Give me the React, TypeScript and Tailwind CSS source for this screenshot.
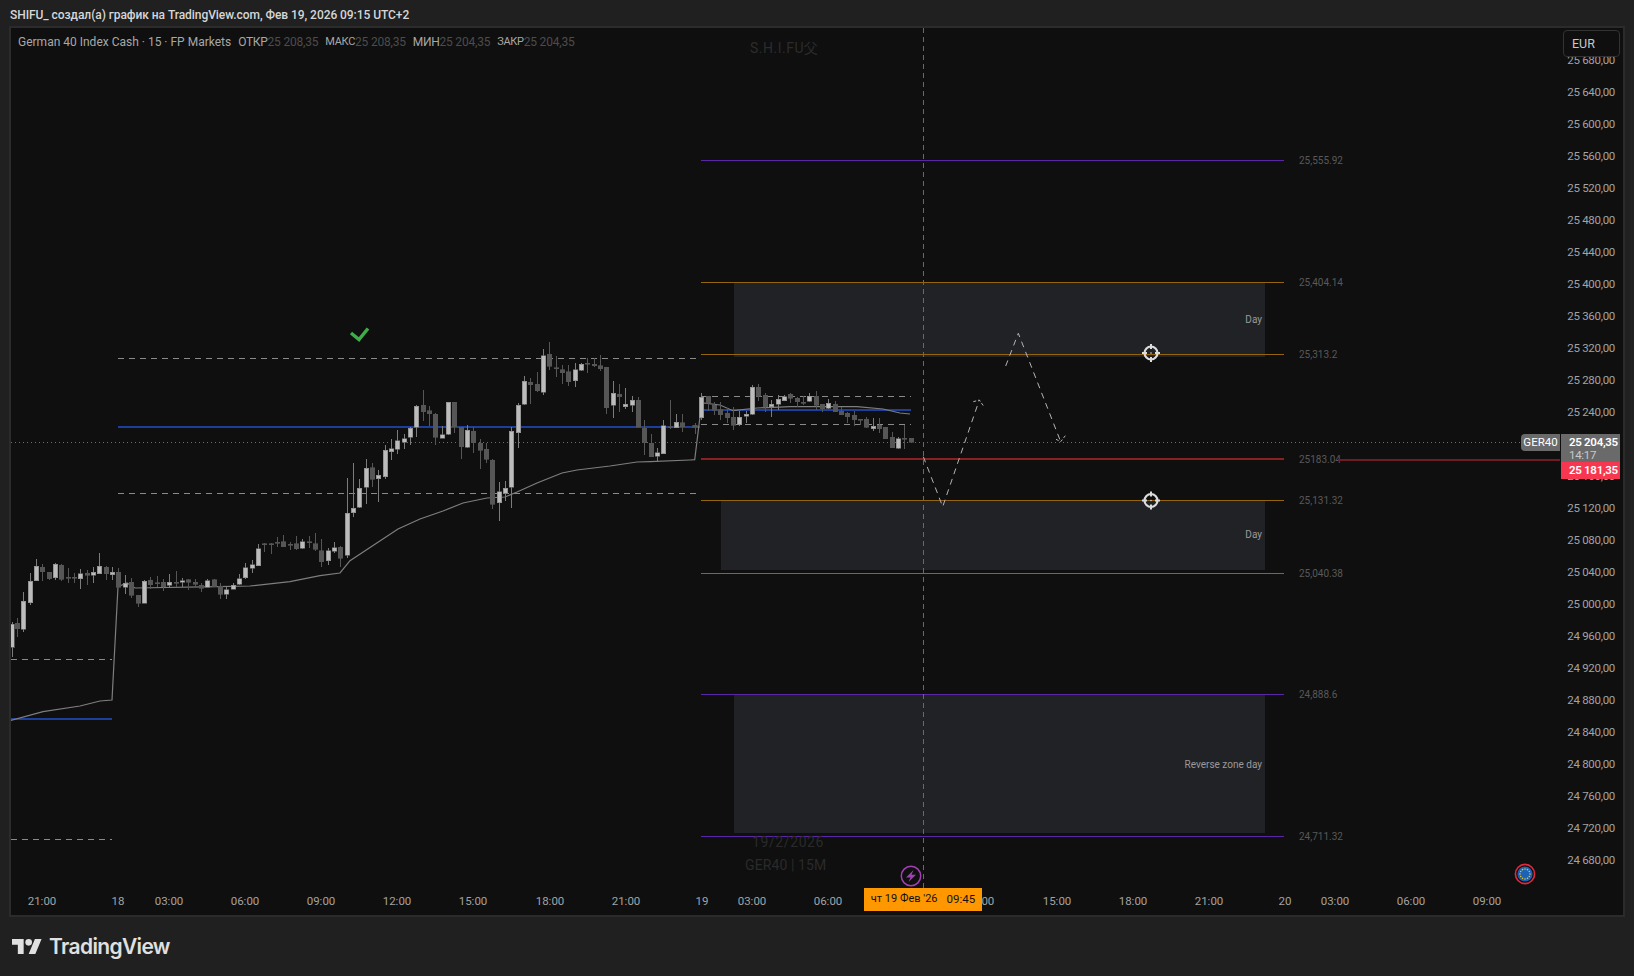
import React from "react";

// [x, bodyTop, bodyBottom, wickTop, wickBottom, bright] in crop coordinates
type Bar = [number, number, number, number, number, number];

const session1a: Bar[] = [
  [36, 283, 352, 277, 382, 1], [53, 280, 296, 265, 320, 0], [71, 214, 298, 186, 305, 1], [91, 154, 218, 128, 224, 1],
  [109, 109, 152, 87, 152, 1], [127, 112, 125, 102, 152, 0], [148, 127, 146, 127, 150, 0], [166, 103, 143, 100, 150, 1],
  [184, 105, 147, 103, 152, 0], [205, 141, 143, 114, 160, 0], [223, 142, 144, 128, 158, 0], [241, 131, 146, 118, 176, 1],
  [262, 130, 136, 120, 164, 0], [280, 127, 136, 112, 160, 1], [298, 109, 131, 70, 131, 1], [319, 112, 131, 108, 150, 0],
  [337, 127, 134, 112, 150, 1], [355, 127, 172, 115, 172, 0], [376, 160, 172, 135, 192, 1], [394, 157, 196, 145, 205, 0],
  [415, 196, 220, 196, 230, 0], [433, 154, 220, 150, 220, 1], [451, 151, 164, 142, 178, 0], [472, 158, 161, 138, 172, 0],
  [490, 157, 170, 148, 182, 0], [508, 157, 166, 132, 172, 1], [529, 157, 160, 123, 172, 0], [547, 152, 157, 143, 170, 1],
  [565, 149, 157, 148, 180, 0], [586, 157, 163, 148, 170, 0], [604, 165, 175, 160, 186, 0], [622, 152, 172, 148, 172, 1],
  [643, 149, 170, 148, 172, 0], [661, 168, 193, 160, 207, 0], [679, 179, 193, 172, 207, 1], [700, 165, 178, 160, 178, 1],
  [718, 146, 163, 132, 165, 1], [736, 113, 143, 100, 146, 1], [757, 104, 115, 90, 128, 1], [775, 56, 107, 43, 107, 1],
  [793, 41, 44, 40, 66, 0], [814, 41, 42, 40, 72, 0], [832, 36, 38, 22, 52, 0], [850, 35, 50, 15, 50, 0],
  [871, 42, 44, 36, 60, 0], [889, 41, 56, 18, 60, 0], [907, 35, 55, 28, 58, 1], [928, 35, 37, 18, 54, 0],
  [946, 41, 58, 10, 64, 0], [964, 62, 95, 28, 112, 0], [985, 62, 92, 55, 105, 1], [1003, 53, 64, 37, 70, 1],
  [1021, 52, 85, 48, 112, 0],
];

const session1b: Bar[] = [
  [52, 580, 705, 475, 715, 1], [70, 565, 578, 430, 590, 1], [88, 505, 562, 478, 565, 1], [109, 445, 502, 418, 552, 1],
  [127, 443, 478, 430, 500, 0], [146, 466, 476, 450, 545, 1], [166, 391, 470, 375, 476, 1], [184, 386, 395, 357, 420, 1],
  [203, 362, 388, 330, 402, 1], [223, 356, 366, 342, 387, 1], [241, 325, 352, 322, 375, 1], [260, 259, 322, 255, 352, 1],
  [280, 256, 275, 210, 302, 0], [298, 272, 281, 258, 318, 0], [316, 283, 352, 279, 374, 0], [337, 344, 355, 318, 355, 1],
  [355, 247, 343, 247, 345, 1], [373, 247, 320, 247, 340, 0], [394, 322, 380, 322, 417, 0], [412, 331, 382, 315, 383, 1],
  [430, 334, 368, 322, 398, 0], [451, 369, 391, 357, 447, 0], [469, 388, 418, 370, 428, 0], [487, 421, 553, 418, 567, 0],
  [508, 515, 548, 487, 602, 1], [526, 505, 519, 482, 543, 1], [544, 334, 502, 322, 563, 1], [565, 256, 338, 250, 383, 1],
  [583, 184, 253, 168, 255, 1], [601, 187, 194, 174, 252, 0], [622, 193, 212, 156, 215, 0], [640, 107, 217, 87, 224, 1],
  [658, 103, 139, 67, 150, 0], [679, 143, 145, 108, 170, 0], [697, 149, 158, 135, 192, 0], [715, 155, 185, 135, 197, 0],
  [736, 149, 182, 128, 200, 1], [754, 133, 151, 128, 153, 1], [772, 129, 131, 114, 158, 0], [793, 133, 137, 115, 140, 0],
  [811, 137, 146, 105, 152, 0], [829, 142, 263, 140, 282, 0], [850, 220, 256, 183, 293, 1], [868, 223, 230, 192, 275, 0],
  [886, 253, 260, 205, 267, 1], [907, 241, 256, 228, 276, 1], [925, 241, 322, 232, 322, 0], [943, 325, 368, 300, 405, 0],
  [964, 369, 410, 342, 410, 0], [982, 398, 409, 385, 425, 1], [1000, 317, 401, 300, 401, 1], [1021, 320, 322, 240, 328, 0],
  [1039, 307, 323, 282, 323, 1], [1057, 308, 320, 283, 335, 0],
];

const session2: Bar[] = [
  [15, 165, 172, 158, 192, 0], [35, 82, 143, 70, 150, 1], [55, 79, 100, 79, 122, 0], [73, 105, 120, 97, 135, 0],
  [91, 119, 134, 97, 150, 0], [112, 130, 143, 115, 160, 0], [130, 142, 166, 112, 180, 0], [148, 142, 164, 122, 168, 1],
  [169, 133, 139, 122, 160, 1], [187, 52, 133, 45, 135, 1], [205, 52, 79, 42, 94, 0], [226, 76, 110, 70, 127, 0],
  [244, 103, 110, 90, 140, 1], [265, 88, 103, 76, 120, 1], [283, 80, 92, 76, 92, 1], [301, 73, 85, 70, 100, 0],
  [322, 85, 95, 82, 112, 0], [340, 97, 99, 79, 105, 0], [358, 79, 94, 70, 97, 1], [379, 79, 105, 64, 120, 0],
  [397, 103, 116, 102, 126, 0], [415, 100, 115, 88, 116, 1], [436, 103, 125, 94, 126, 0], [454, 124, 134, 110, 136, 0],
  [472, 130, 140, 127, 158, 0], [493, 136, 149, 124, 168, 0], [511, 148, 151, 148, 166, 0], [529, 148, 172, 140, 175, 0],
  [550, 169, 176, 145, 182, 1], [568, 165, 176, 145, 188, 0], [586, 172, 206, 170, 208, 0], [607, 202, 233, 185, 233, 0],
  [625, 206, 235, 200, 236, 1], [643, 205, 207, 165, 236, 0], [664, 205, 217, 205, 218, 0],
];

const toPage = (bars: Bar[], ox: number, oy: number): Bar[] =>
  bars.map(([x, a, b, c, d, up]) => [ox + x / 3, oy + a / 3, oy + b / 3, oy + c / 3, oy + d / 3, up]);

const allBars = [...toPage(session1a, 0, 530), ...toPage(session1b, 330, 320), ...toPage(session2, 690, 370)];

// 25 200 sits behind the price tag, its row stays empty
const prices = [
  "25 680,00", "25 640,00", "25 600,00", "25 560,00", "25 520,00", "25 480,00", "25 440,00", "25 400,00",
  "25 360,00", "25 320,00", "25 280,00", "25 240,00", "", "25 160,00", "25 120,00", "25 080,00",
  "25 040,00", "25 000,00", "24 960,00", "24 920,00", "24 880,00", "24 840,00", "24 800,00", "24 760,00",
  "24 720,00", "24 680,00",
];

const times: { t: string; cls: string }[] = [
  { t: "21:00", cls: "ml-[31px]" }, { t: "18", cls: "ml-[76px]" }, { t: "03:00", cls: "ml-[51px]" },
  { t: "06:00", cls: "ml-[76px]" }, { t: "09:00", cls: "ml-[76px]" }, { t: "12:00", cls: "ml-[76px]" },
  { t: "15:00", cls: "ml-[76px]" }, { t: "18:00", cls: "ml-[77px]" }, { t: "21:00", cls: "ml-[76px]" },
  { t: "19", cls: "ml-[76px]" }, { t: "03:00", cls: "ml-[50px]" }, { t: "06:00", cls: "ml-[76px]" },
  { t: "12:00", cls: "ml-[152px]" }, { t: "15:00", cls: "ml-[77px]" },
  { t: "18:00", cls: "ml-[76px]" }, { t: "21:00", cls: "ml-[76px]" }, { t: "20", cls: "ml-[76px]" },
  { t: "03:00", cls: "ml-[50px]" }, { t: "06:00", cls: "ml-[76px]" }, { t: "09:00", cls: "ml-[76px]" },
];

// level lines: label, y, colour, stroke
const levels: [string, number, string, number][] = [
  ["25,555.92", 160.5, "#5a26a8", 1],
  ["25,404.14", 282.5, "#94640f", 1],
  ["25,313.2", 354.5, "#94640f", 1],
  ["25183.04", 459, "#8c1f1f", 2],
  ["25,131.32", 500.5, "#94640f", 1],
  ["25,040.38", 573.5, "#94640f", 1],
  ["24,888.6", 694.5, "#5a26a8", 1],
  ["24,711.32", 836.5, "#5a26a8", 1],
];

const font = "font-['Roboto',sans-serif]";

function Target({ x, y }: { x: number; y: number }) {
  return (
    <g stroke="#dcdcdc" fill="none">
      <circle cx={x} cy={y} r={6.5} strokeWidth={2.2} />
      <path d={`M${x - 9} ${y}h5M${x + 4} ${y}h5M${x} ${y - 9}v5M${x} ${y + 4}v5`} strokeWidth={2} />
      <circle cx={x} cy={y} r={0.8} fill="#dcdcdc" strokeWidth={0} />
    </g>
  );
}

function ChartDrawing() {
  const stars = Array.from({ length: 12 }, (_, i) => {
    const a = (i * Math.PI) / 6;
    return [1525 + 5 * Math.cos(a), 874 + 5 * Math.sin(a)];
  });
  return (
    <svg className="absolute inset-0 h-full w-full" viewBox="11 28 1549 860">
      {/* zones */}
      <rect x={734} y={282} width={531} height={75} fill="#212225" />
      <rect x={721} y={500} width={544} height={70} fill="#212225" />
      <rect x={734} y={694} width={531} height={139} fill="#212225" />

      {/* session guides */}
      <g stroke="#8a8a8a" strokeDasharray="6 5" fill="none">
        <path d="M118 358.5H698M118 493.5H698M11 659.5H112M11 839.5H112M701 396.5H911M701 424.5H911" />
      </g>
      <g stroke="#1d3f9c" strokeWidth={2} fill="none">
        <path d="M118 427H700M11 719H112M701 410H911" />
      </g>

      {/* vwap */}
      <path
        d="M10 720.7L43 711.7L80 706L100 701L112 700L118 586.7L127 583L135 588L217 586.7L250 586L290 581.7L320 575.7L340 573L350 560.7L398 529L420 519L443 511L463 503L487 498L505 497L517 492L537 483L562 473L577 470L610 466L637 462L650 461.7L690 460L694.7 459.7L700 416.7L703 403L720 405L733 410.7L757 408L790 406.7L857 406.7L883 409L900 413L910 414"
        stroke="#7e7e7e"
        strokeWidth={1.2}
        fill="none"
      />

      {/* dotted last price */}
      <path d="M11 442.5H1521" stroke="#6e6e6e" strokeDasharray="1 3" />

      {/* candles */}
      {allBars.map(([x, a, b, c, d, up], i) => (
        <g key={i} shapeRendering="crispEdges">
          <path d={`M${x} ${c}V${d}`} stroke={up ? "#7c7c7c" : "#565656"} />
          <rect
            x={x - 2.3}
            y={a}
            width={4.6}
            height={Math.max(b - a, 1)}
            fill={up ? "#bcbcbc" : "#565656"}
            stroke={up ? "#7c7c7c" : "#565656"}
            strokeWidth={0.6}
          />
        </g>
      ))}

      {/* levels */}
      {levels.map(([label, y, color, w]) => (
        <g key={label}>
          <path d={`M701 ${y}H1284`} stroke={color} strokeWidth={w} />
          <text x={1299} y={y + 3.5} className={`${font} fill-[#595959] text-[10px]`}>
            {label}
          </text>
        </g>
      ))}
      <path d="M1338 460H1560" stroke="#6e1c26" strokeWidth={2} />

      <text x={1262} y={323} textAnchor="end" className={`${font} fill-[#9a9a9a] text-[10px]`}>Day</text>
      <text x={1262} y={538} textAnchor="end" className={`${font} fill-[#9a9a9a] text-[10px]`}>Day</text>
      <text x={1262} y={768} textAnchor="end" className={`${font} fill-[#9a9a9a] text-[10px]`}>Reverse zone day</text>

      {/* now line */}
      <path d="M923.5 28V888" stroke="#8f6320" strokeDasharray="5 4" />

      {/* forecast */}
      <g stroke="#b4b4b4" strokeDasharray="6 5" fill="none">
        <path d="M923.3 456.7L942.7 506.7L979.3 400" />
        <path d="M973.3 401.7L979.3 400L983.3 405.7" strokeDasharray="3 2" />
        <path d="M1005.7 366L1018.3 333.3L1060.7 441.7" />
        <path d="M1056 439.3L1060.7 441.7L1065.3 435.7" strokeDasharray="3 2" />
      </g>

      <Target x={1151} y={353} />
      <Target x={1151} y={500.5} />

      {/* check mark */}
      <path d="M351 333L359 339.5L368 328.5" stroke="#3fae49" strokeWidth={3.4} fill="none" />

      {/* watermarks */}
      <text x={750} y={53} className={`${font} fill-[#2c2c2c] text-[14px] tracking-[0.5px]`}>S.H.I.FU父</text>
      <text x={752} y={847} className={`${font} fill-[#2a2a2a] text-[14px] tracking-[0.6px]`}>19/2/2026</text>
      <text x={745} y={870} className={`${font} fill-[#2a2a2a] text-[14px] tracking-[0.1px]`}>GER40 | 15M</text>

      {/* bolt */}
      <circle cx={911} cy={876} r={9.7} stroke="#a23fb5" strokeWidth={1.5} fill="#0f0f0f" />
      <path d="M913.5 870L906 877.5H910.5L908.5 882L916 874.8H911.5Z" fill="#a23fb5" />

      {/* EU flag */}
      <circle cx={1525} cy={874} r={9.6} stroke="#e02a3c" strokeWidth={1.6} fill="#0f0f0f" />
      <circle cx={1525} cy={874} r={7.6} fill="#1c62b8" />
      {stars.map(([x, y], i) => (
        <circle key={i} cx={x} cy={y} r={0.8} fill="#d8c53a" />
      ))}
    </svg>
  );
}

function Legend() {
  const items = [
    { k: "ОТКР", v: "25 208,35", cls: "text-[12px]" },
    { k: "МАКС", v: "25 208,35", cls: "text-[11px]" },
    { k: "МИН", v: "25 204,35", cls: "text-[12px]" },
    { k: "ЗАКР", v: "25 204,35", cls: "text-[11px]" },
  ];
  return (
    <div className="absolute left-[7px] top-[6px] flex items-center gap-[7px] whitespace-nowrap text-[12px] leading-4 text-[#a8a8a8]">
      <span>German 40 Index Cash · 15 · FP Markets</span>
      {items.map((it) => (
        <span key={it.k} className="flex items-center">
          <span className={`tracking-[-0.3px] ${it.cls}`}>{it.k}</span>
          <span className="tracking-[-0.2px] text-[#4c4c4c]">{it.v}</span>
        </span>
      ))}
    </div>
  );
}

export default function App() {
  return (
    <div className={`flex h-[976px] w-[1634px] flex-col overflow-hidden bg-[#202020] text-[#a8a8a8] ${font}`}>
      <header className="flex h-[26px] shrink-0 items-center pl-[10px] pt-[4px] text-[12px] font-medium tracking-[-0.06px] text-[#d6d6d6]">
        SHIFU_ создал(а) график на TradingView.com, Фев 19, 2026 09:15 UTC+2
      </header>

      <main className="mx-[9px] flex h-[891px] shrink-0 flex-col border-2 border-[#2b2b2b] bg-[#0f0f0f]">
        <div className="flex h-[860px] shrink-0">
          <div className="relative flex-1 overflow-hidden">
            <ChartDrawing />
            <Legend />
            <div className="absolute right-0 top-[406px] flex h-[17px] w-[39px] items-center justify-center rounded-l-sm bg-[#6a6a6a] text-[11.5px] text-white">
              GER40
            </div>
          </div>

          <div className="relative w-[63px] shrink-0 overflow-hidden pt-[17px]">
            {prices.map((p, i) => (
              <div key={i} className="flex h-[32px] items-center justify-end whitespace-nowrap pr-2 text-[11.5px] tracking-[-0.3px] text-[#a3a3a3]">
                {p}
              </div>
            ))}
            <div className="absolute left-[3px] top-[2px] flex h-[27px] w-[57px] items-center rounded-[4px] border border-[#333333] bg-[#0f0f0f] pl-2 pt-[2px] text-[12.5px] text-[#c8c8c8]">
              EUR
            </div>
            <div className="absolute left-[1px] top-[406px] flex w-[59px] flex-col whitespace-nowrap text-[11.5px] leading-[13px] tracking-[-0.3px]">
              <div className="flex h-[28px] flex-col bg-[#6a6a6a] pl-2 pt-[2px] text-[#c8c8c8]">
                <span className="font-semibold text-white">25 204,35</span>
                <span>14:17</span>
              </div>
              <div className="flex h-[17px] items-center bg-[#f7374f] pl-2 font-semibold text-white">25 181,35</div>
            </div>
          </div>
        </div>

        <div className="relative flex h-[27px] shrink-0 items-center text-[11.5px] text-[#a3a3a3]">
          {times.map((x, i) => (
            <div key={i} className={`flex w-0 justify-center ${x.cls}`}>
              {x.t}
            </div>
          ))}
          <div className="absolute left-[853px] top-0 flex h-[23px] w-[118px] items-center justify-center gap-[9px] whitespace-nowrap bg-[#ff9800] text-[#111111]">
            <span className="text-[11px]">чт 19 Фев '26</span>
            <span className="text-[11.5px]">09:45</span>
          </div>
        </div>
      </main>

      <footer className="flex flex-1 items-center gap-[7px] pl-[12px] pb-[1px]">
        <svg viewBox="0 0 36 18" className="h-[15px] w-[30px]" fill="#e0e0e0">
          <path d="M14 18H7V7H0V0h14v18zM28 18h-8L27.5 0h8L28 18z" />
          <circle cx="20" cy="4" r="4" />
        </svg>
        <span className="font-['Inter',sans-serif] text-[21px] font-semibold leading-none tracking-[-0.65px] text-[#e0e0e0]">
          TradingView
        </span>
      </footer>
    </div>
  );
}
